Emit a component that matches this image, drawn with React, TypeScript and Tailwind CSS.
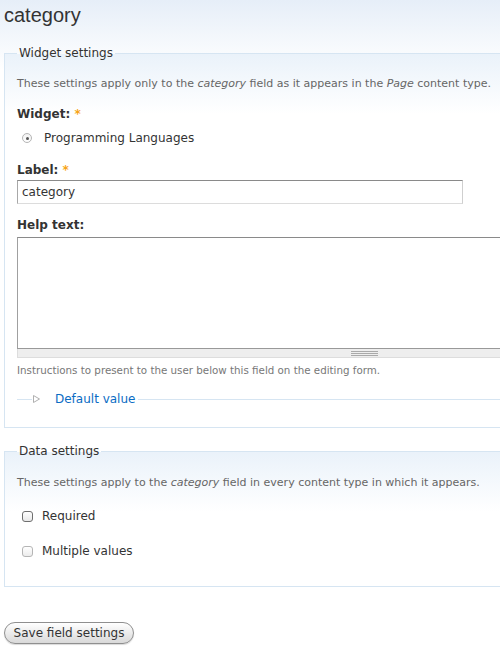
export default function App() {
  return (
    <div className="min-h-[651px] w-[500px] overflow-hidden bg-gradient-to-b from-[#e6eef8] via-white to-white bg-no-repeat font-['DejaVu_Sans',Verdana,sans-serif] text-[#333]" style={{ backgroundSize: "100% 140px" }}>
      <h1 className="px-[4px] pt-[3px] font-['Liberation_Sans',Arial,sans-serif] text-[20px] leading-[24px] text-[#333]">
        category
      </h1>

      {/* Widget settings */}
      <fieldset className="mt-[18px] ml-[4px] w-[740px] border border-[#d6e5f2] bg-gradient-to-b from-[#eaf2fa] to-white bg-no-repeat pl-[12px] pb-[20px]" style={{ backgroundSize: "100% 60px" }}>
        <legend className="px-[2px] text-[12px] leading-[16px] text-[#333]">Widget settings</legend>

        <p className="mt-[15px] text-[11px] leading-[16px] text-[#666]">
          These settings apply only to the <em>category</em> field as it appears in the <em>Page</em> content type.
        </p>

        <div className="mt-[14px] text-[12px] font-bold leading-[16px]">
          Widget: <span className="text-[#f7a416]">*</span>
        </div>
        <div className="mt-[8px] flex items-center gap-[12px] pl-[5px] text-[12px] leading-[16px]">
          <span className="flex h-[10px] w-[10px] items-center justify-center rounded-full border border-[#b5b5b5] bg-gradient-to-b from-[#f2f2f2] to-white">
            <span className="h-[3px] w-[3px] rounded-full bg-[#555]"></span>
          </span>
          Programming Languages
        </div>

        <div className="mt-[16px] text-[12px] font-bold leading-[16px]">
          Label: <span className="text-[#f7a416]">*</span>
        </div>
        <div className="mt-[2px] flex h-[24px] w-[446px] items-center border border-t-[#8a8a8a] border-l-[#a8a8a8] border-r-[#cfcfcf] border-b-[#dcdcdc] bg-white px-[4px] text-[12px]">
          category
        </div>

        <div className="mt-[13px] text-[12px] font-bold leading-[16px]">Help text:</div>
        <div className="mt-[4px] w-[694px]">
          <div className="h-[112px] border border-t-[#8a8a8a] border-l-[#a0a0a0] border-b-[#999] bg-white"></div>
          <div className="flex h-[9px] items-center justify-center border-x border-b border-[#ddd] bg-[#eeeeee]">
            <div className="flex w-[27px] flex-col gap-[1px]">
              <span className="h-px bg-[#aaa]"></span>
              <span className="h-px bg-[#aaa]"></span>
              <span className="h-px bg-[#aaa]"></span>
            </div>
          </div>
        </div>
        <p className="mt-[5px] text-[10.3px] leading-[14px] text-[#777]">
          Instructions to present to the user below this field on the editing form.
        </p>

        <fieldset className="mt-[14px] border-t border-[#d6e5f2]">
          <legend className="ml-[15px] flex items-center pr-[3px] text-[12px] leading-[16px]">
            <svg width="9" height="10" viewBox="0 0 9 10" className="mr-[14px]">
              <path d="M1.5 1.5 L7.5 5 L1.5 8.5 Z" fill="white" stroke="#b0b0b0" strokeWidth="1" />
            </svg>
            <span className="text-[#0a6cc4]">Default value</span>
          </legend>
        </fieldset>
      </fieldset>

      {/* Data settings */}
      <fieldset className="mt-[15px] ml-[4px] w-[740px] border border-[#d6e5f2] bg-gradient-to-b from-[#eaf2fa] to-white bg-no-repeat pl-[12px] pb-[27px]" style={{ backgroundSize: "100% 60px" }}>
        <legend className="px-[2px] text-[12px] leading-[16px] text-[#333]">Data settings</legend>

        <p className="mt-[16px] text-[11px] leading-[16px] text-[#666]">
          These settings apply to the <em>category</em> field in every content type in which it appears.
        </p>

        <div className="mt-[17px] flex items-center gap-[9px] pl-[5px] text-[12px] leading-[16px]">
          <span className="h-[11px] w-[11px] rounded-[3px] border border-[#6f6f6f] bg-gradient-to-b from-white to-[#e8e8e8]"></span>
          Required
        </div>
        <div className="mt-[19px] flex items-center gap-[9px] pl-[5px] text-[12px] leading-[16px]">
          <span className="h-[11px] w-[11px] rounded-[3px] border border-[#b5b5b5] bg-gradient-to-b from-white to-[#ececec]"></span>
          Multiple values
        </div>
      </fieldset>

      <div className="ml-[4px] mt-[33px]">
        <button className="h-[22px] w-[130px] rounded-full border border-[#8f8f8f] bg-gradient-to-b from-white to-[#d9d9d9] text-[12px] leading-[20px] text-[#333] shadow-[0_1px_1px_rgba(0,0,0,0.15)]">
          Save field settings
        </button>
      </div>
    </div>
  );
}
